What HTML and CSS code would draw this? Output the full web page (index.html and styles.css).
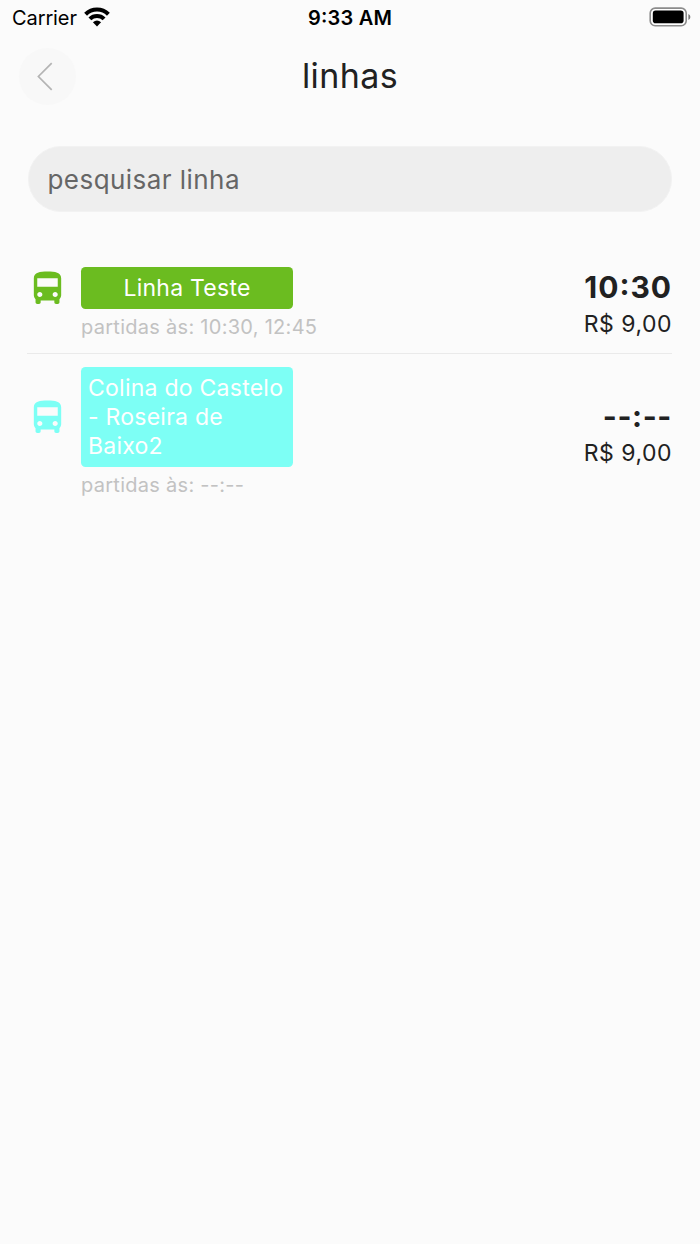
FILE: index.html
```html
<!DOCTYPE html>
<html lang="pt-BR">
<head>
<meta charset="utf-8">
<title>linhas</title>
<link rel="stylesheet" href="styles.css">
</head>
<body>
<svg class="defs" width="0" height="0">
  <symbol id="bus" viewBox="0 0 24 24"><path d="M4 16c0 .88.39 1.67 1 2.22V20c0 .55.45 1 1 1h1c.55 0 1-.45 1-1v-1h8v1c0 .55.45 1 1 1h1c.55 0 1-.45 1-1v-1.78c.61-.55 1-1.34 1-2.22V6c0-3.5-3.58-4-8-4s-8 .5-8 4v10zm3.5 1c-.83 0-1.5-.67-1.5-1.5S6.67 14 7.5 14s1.5.67 1.5 1.5S8.33 17 7.5 17zm9 0c-.83 0-1.5-.67-1.5-1.5s.67-1.5 1.5-1.5 1.5.67 1.5 1.5-.67 1.5-1.5 1.5zm1.5-6H6V6h12v5z"/></symbol>
</svg>
<div class="status">
  <div class="carrier"><span class="carrier-name">Carrier</span>
    <svg class="wifi" width="26" height="20" viewBox="0 0 26 20"><g fill="none" stroke="#000" stroke-width="4.1"><path d="M1.6 7.2A16.3 16.3 0 0 1 24.4 7.2"/><path d="M5.9 11.9A10.2 10.2 0 0 1 20.1 11.9"/></g><path d="M8.9 15.3Q13 11.7 17.1 15.3L13 19.4Z"/></svg>
  </div>
  <div class="clock">9:33 AM</div>
  <svg class="battery" width="42" height="20" viewBox="0 0 42 20"><rect x="1.2" y="1.1" width="36" height="17.6" rx="5" fill="#fff" stroke="#8c8c8c" stroke-width="1.6"/><rect x="3.8" y="3.6" width="30.8" height="12.6" rx="2.8"/><path d="M39.4 7Q41.4 8 41.4 10T39.4 13Z" fill="#777"/></svg>
</div>
<header class="header">
  <div class="back"><svg width="57" height="57" viewBox="0 0 57 57"><path d="M32.7 15.2L19.4 28.5L32.7 41.8" fill="none" stroke="#b4b4b4" stroke-width="1.7"/></svg></div>
  <h1 class="title">linhas</h1>
</header>
<div class="search"><span class="placeholder">pesquisar linha</span></div>
<main class="lines">
  <section class="line green">
    <div class="info">
      <svg class="bus"><use href="#bus"/></svg>
      <div class="badge centered">Linha Teste</div>
      <div class="departures">partidas às: 10:30, 12:45</div>
    </div>
    <div class="fare"><div class="time">10:30</div><div class="price">R$ 9,00</div></div>
  </section>
  <section class="line cyan">
    <div class="info">
      <svg class="bus"><use href="#bus"/></svg>
      <div class="badge">Colina do Castelo<br>- Roseira de<br>Baixo2</div>
      <div class="departures">partidas às: --:--</div>
    </div>
    <div class="fare"><div class="time dashes">--:--</div><div class="price">R$ 9,00</div></div>
  </section>
</main>
</body>
</html>
```
FILE: styles.css
```css
* { box-sizing: border-box; }
body { margin: 0; min-height: 1244px; background: #fbfbfb; color: #212121; font-family: Inter, "Liberation Sans", sans-serif; font-feature-settings: "calt" 0; white-space: nowrap; }
svg { display: block; flex: none; }
.defs { position: absolute; }
.status { display: grid; grid-template-columns: 1fr auto 1fr; align-items: center; height: 36px; padding: 0 9px 0 12px; color: #000; }
.carrier { display: flex; align-items: center; gap: 7px; font-size: 20px; letter-spacing: -.1px; }
.wifi { margin-top: -3px; }
.clock { margin-left: -3px; font-size: 20px; font-weight: 600; letter-spacing: .2px; font-feature-settings: "case" 1; }
.battery { justify-self: end; margin-top: -2px; }
.header { display: grid; grid-template-columns: 57px 1fr 57px; align-items: center; height: 80px; padding: 0 19px; }
.back { width: 57px; height: 57px; border-radius: 50%; background: #f8f8f8; }
.title { margin: 0; text-align: center; font-size: 34px; font-weight: 400; line-height: 40px; letter-spacing: .4px; }
.search { display: flex; align-items: center; height: 66px; margin: 30px 28px 0; padding: 0 18.5px; border: 1px solid #f2f2f2; border-radius: 33px; background: #eee; }
.placeholder { font-size: 26px; color: #666; letter-spacing: .45px; }
.lines { padding: 42px 28px 0 27px; }
.line { display: flex; justify-content: space-between; align-items: center; padding: 13px 0; }
.line + .line { border-top: 1px solid #eaeaea; }
.info { display: grid; grid-template-columns: 41px 212px; column-gap: 13px; align-items: center; }
.bus { width: 41px; height: 41px; fill: currentColor; }
.green { color: #6bbc20; }
.cyan { color: #7dfff5; }
.badge { padding: 6.5px 7px; border-radius: 4.5px; background: currentColor; font-size: 23px; line-height: 29px; letter-spacing: .25px; -webkit-text-fill-color: #fff; }
.centered { text-align: center; }
.departures { grid-column: 2; padding-top: 5px; font-size: 20px; line-height: 26px; color: #c2c2c2; letter-spacing: .28px; }
.fare { padding-top: 2px; color: #212121; text-align: right; }
.time { font-size: 30px; font-weight: 700; line-height: 32px; letter-spacing: 1px; font-feature-settings: "case" 1; }
.dashes { letter-spacing: .6px; font-feature-settings: normal; }
.price { margin-top: 8.5px; font-size: 23px; line-height: 27px; letter-spacing: .5px; }
```
